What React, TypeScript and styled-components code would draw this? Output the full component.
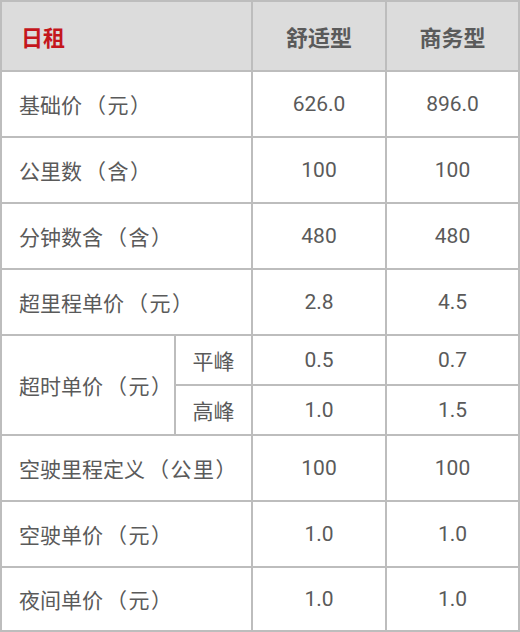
import React from 'react'
import styled, { createGlobalStyle } from 'styled-components'

const GlobalStyle = createGlobalStyle`
    html, body {
        margin: 0;
        padding: 0;
        background: #ffffff;
        overflow: hidden;
    }
    body {
        font-family: Roboto, 'Noto Sans CJK SC', sans-serif;
    }
`

const Table = styled.div`
    width: 520px;
    box-sizing: border-box;
    display: grid;
    grid-template-columns: 172px 75px 132px 131px;
    grid-template-rows: 68px 64px 64px 64px 64px 48px 48px 64px 64px 62px;
    gap: 2px;
    padding: 2px;
    background: #bdbdbd;
`

const Cell = styled.div<{ $align?: 'left' | 'center'; $span?: number; $rows?: number }>`
    background: #ffffff;
    display: flex;
    align-items: center;
    justify-content: ${(props) => (props.$align === 'left' ? 'flex-start' : 'center')};
    padding-left: ${(props) => (props.$align === 'left' ? '17px' : '0')};
    grid-column: ${(props) => (props.$span ? `span ${props.$span}` : 'auto')};
    grid-row: ${(props) => (props.$rows ? `span ${props.$rows}` : 'auto')};
    font-size: 21px;
    color: #5a5a5a;
    white-space: nowrap;
`

const HeadCell = styled(Cell)<{ $accent?: boolean }>`
    background: #dcdcdc;
    font-size: 22px;
    font-weight: 700;
    color: ${(props) => (props.$accent ? '#c4161c' : '#5a5a5a')};
    padding-left: ${(props) => (props.$align === 'left' ? '19px' : '0')};
`

// the unit in brackets is set a little looser than the label
const Unit = styled.span`
    margin-left: 3px;
    letter-spacing: 1.5px;
`

const Num = styled.span`
    font-size: 21px;
`

type Row = {
    label: string
    unit: string
    comfort: string
    business: string
}

const topRows: Row[] = [
    { label: '基础价', unit: '（元）', comfort: '626.0', business: '896.0' },
    { label: '公里数', unit: '（含）', comfort: '100', business: '100' },
    { label: '分钟数含', unit: '（含）', comfort: '480', business: '480' },
    { label: '超里程单价', unit: '（元）', comfort: '2.8', business: '4.5' },
]

const bottomRows: Row[] = [
    { label: '空驶里程定义', unit: '（公里）', comfort: '100', business: '100' },
    { label: '空驶单价', unit: '（元）', comfort: '1.0', business: '1.0' },
    { label: '夜间单价', unit: '（元）', comfort: '1.0', business: '1.0' },
]

const peakRows = [
    { label: '平峰', comfort: '0.5', business: '0.7' },
    { label: '高峰', comfort: '1.0', business: '1.5' },
]

const PlainRow = ({ row }: { row: Row }) => (
    <>
        <Cell $align='left' $span={2}>
            {row.label}
            <Unit>{row.unit}</Unit>
        </Cell>
        <Cell>
            <Num>{row.comfort}</Num>
        </Cell>
        <Cell>
            <Num>{row.business}</Num>
        </Cell>
    </>
)

const App = () => {
    return (
        <>
            <GlobalStyle />
            <Table>
                <HeadCell $align='left' $span={2} $accent>
                    日租
                </HeadCell>
                <HeadCell>舒适型</HeadCell>
                <HeadCell>商务型</HeadCell>

                {topRows.map((row) => (
                    <PlainRow key={row.label} row={row} />
                ))}

                <Cell $align='left' $rows={2}>
                    超时单价<Unit>（元）</Unit>
                </Cell>
                {peakRows.map((p) => (
                    <React.Fragment key={p.label}>
                        <Cell>{p.label}</Cell>
                        <Cell>
                            <Num>{p.comfort}</Num>
                        </Cell>
                        <Cell>
                            <Num>{p.business}</Num>
                        </Cell>
                    </React.Fragment>
                ))}

                {bottomRows.map((row) => (
                    <PlainRow key={row.label} row={row} />
                ))}
            </Table>
        </>
    )
}

export default App
